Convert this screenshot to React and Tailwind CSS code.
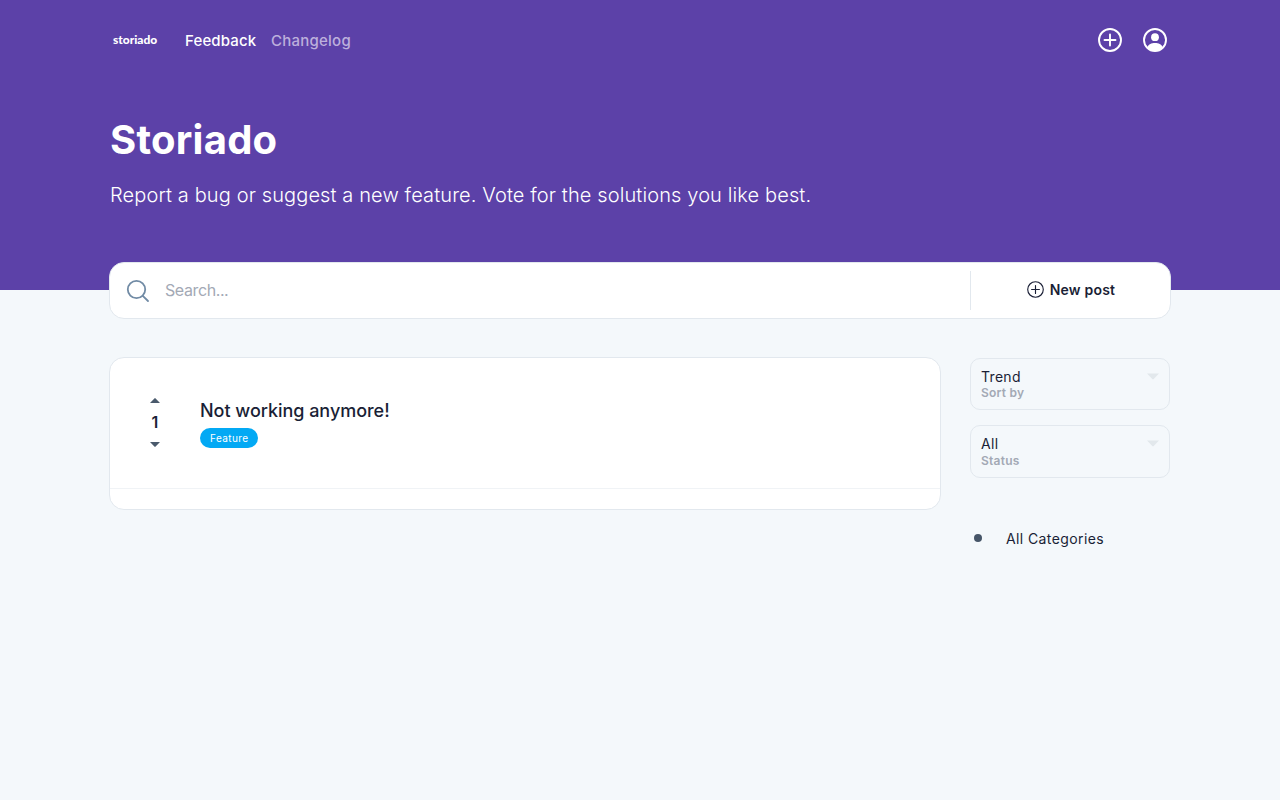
import React from "react";

const Caret = ({ down, className }) => (
  <svg width="10" height="5" viewBox="0 0 10 5" className={className} fill="currentColor">
    {down ? <path d="M0 0h10L5.6 4.6a.8.8 0 0 1-1.2 0z" /> : <path d="M0 5h10L5.6.4a.8.8 0 0 0-1.2 0z" />}
  </svg>
);

const Plus = ({ size, sw }) => (
  <svg width={size} height={size} viewBox="0 0 24 24" fill="none" stroke="currentColor" strokeWidth={sw} strokeLinecap="round">
    <circle cx="12" cy="12" r="11" />
    <path d="M12 6.500v11M6.500 12h11" />
  </svg>
);

const Select = ({ value, label, tall }) => (
  <div className={tall ? "relative h-[53px] rounded-[10px] border border-[#e2e8ee] pl-[10px] pt-[9px]" : "relative h-[52px] rounded-[10px] border border-[#e2e8ee] pl-[10px] pt-[9px]"}>
    <div className="text-[14px] leading-[18px] tracking-[0.3px] text-[#1a1f36]">{value}</div>
    <div className={tall ? "mt-[1px] text-[12px] leading-[14px] font-semibold tracking-[0.25px] text-[#a3a9b5]" : "text-[12px] leading-[14px] font-semibold tracking-[0.25px] text-[#a3a9b5]"}>{label}</div>
    <Caret down className="absolute right-[10px] top-[14px] w-[12px] h-[7px] text-[#e2e8ec]" />
  </div>
);

export default function App() {
  return (
    <div className="min-h-[800px] bg-[#f4f8fb] font-['Inter',sans-serif] text-[#1a1f36]">
      <header className="h-[290px] bg-[#5c41a8] text-white">
        <div className="mx-auto w-[1060px]">
          <nav className="flex h-[82px] items-center">
            <div className="ml-[3px] w-[72px] -translate-y-[1px] font-['Lato',sans-serif] text-[12px] font-black">storiado</div>
            <a className="text-[15px] font-medium tracking-[0.15px]">Feedback</a>
            <a className="ml-[14.500px] text-[15px] font-medium tracking-[0.25px] text-[#bdb0dc]">Changelog</a>
            <div className="ml-auto mr-[3px] flex items-center gap-[21px] -translate-y-[1px]">
              <Plus size={24} sw={1.900} />
              <svg width="24" height="24" viewBox="0 0 24 24">
                <circle cx="12" cy="12" r="11" fill="none" stroke="currentColor" strokeWidth="1.900" />
                <circle cx="12" cy="9.200" r="3.900" fill="currentColor" />
                <path d="M4.400 19.200C5.600 16 8.400 15 12 15s6.400 1 7.600 4.200A11 11 0 0 1 12 23a11 11 0 0 1-7.600-3.800z" fill="currentColor" />
              </svg>
            </div>
          </nav>
          <h1 className="mt-[33px] text-[40px] leading-[50px] font-bold tracking-[0.25px]">Storiado</h1>
          <p className="mt-[15px] text-[20px] leading-[30px] font-light tracking-[0.12px]">Report a bug or suggest a new feature. Vote for the solutions you like best.</p>
        </div>
      </header>

      <main className="mx-auto w-[1062px]">
        <div className="-mt-[28px] relative flex h-[57px] items-center rounded-[15px] border border-[#e2e8ee] bg-white">
          <svg width="24" height="24" viewBox="0 0 24 24" fill="none" stroke="#718ba5" strokeWidth="1.800" strokeLinecap="round" className="ml-[16px]">
            <circle cx="10.500" cy="10.500" r="8.700" />
            <path d="M16.800 16.800l5.200 5.200" />
          </svg>
          <div className="ml-[15px] flex-1 -translate-y-[1px] text-[16px] tracking-[-0.4px] text-[#a3a9b5]">Search...</div>
          <div className="flex h-[39px] w-[200px] items-center justify-center gap-[7px] border-l border-[#e2e8ee] text-[14px] font-semibold">
            <span className="translate-x-[1px] -translate-y-[1px]"><Plus size={17} sw={1.600} /></span>
            <span className="-translate-y-[1px] tracking-[0.2px]">New post</span>
          </div>
        </div>

        <div className="mt-[38px] flex items-start">
          <section className="h-[153px] w-[832px] rounded-[15px] border border-[#e2e8ee] bg-white">
            <div className="flex h-[131px] border-b border-[#f0f3f6]">
              <div className="ml-[40px] flex w-[10px] flex-col items-center pt-[40px] text-[#4a5a6c]">
                <Caret />
                <div className="mt-[8px] text-[16px] leading-[22px] font-semibold text-[#1a1f36]">1</div>
                <Caret down className="mt-[9px]" />
              </div>
              <div className="ml-[40px] pt-[40px]">
                <div className="text-[18px] leading-[26px] font-medium tracking-[-0.03px]">Not working anymore!</div>
                <div className="flex"><div className="mt-[4px] flex h-[20px] items-center rounded-full bg-[#03a9f4] px-[10px] text-[10px] tracking-[0.4px] text-white">Feature</div></div>
              </div>
            </div>
          </section>

          <aside className="ml-[29px] mt-[1px] w-[200px]">
            <Select value="Trend" label="Sort by" />
            <div className="mt-[15px]"><Select value="All" label="Status" tall /></div>
            <div className="mt-[49px] flex h-[22px] items-center text-[14px] tracking-[0.4px]">
              <span className="ml-[4px] h-[8px] w-[8px] rounded-full bg-[#465568]" />
              <span className="ml-[24px]">All Categories</span>
            </div>
          </aside>
        </div>
      </main>
    </div>
  );
}
